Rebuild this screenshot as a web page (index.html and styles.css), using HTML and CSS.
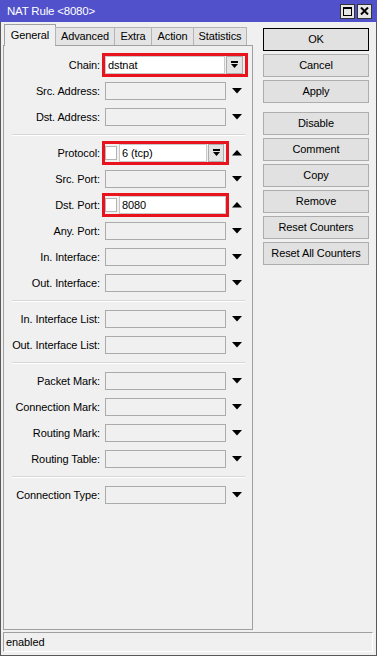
FILE: index.html
```html
<!DOCTYPE html>
<html lang="en">
<head>
    <meta charset="UTF-8">
    <meta name="viewport" content="width=device-width, initial-scale=1.0">
    <title>NAT Rule &lt;8080&gt;</title>
    <link rel="stylesheet" href="styles.css">
</head>
<body>
    <div class="window">
        <div class="titlebar">
            <span class="title">NAT Rule &lt;8080&gt;</span>
            <div class="title-buttons">
                <span class="tbtn">
                    <svg width="9" height="9" viewBox="0 0 9 9"><rect x="0.5" y="0.5" width="8" height="8" fill="none" stroke="#000"/><rect x="0" y="0" width="9" height="2" fill="#000"/></svg>
                </span>
                <span class="tbtn">
                    <svg width="9" height="8" viewBox="0 0 9 8"><path d="M1 0.5 L8 7.5 M8 0.5 L1 7.5" stroke="#000" stroke-width="2"/></svg>
                </span>
            </div>
        </div>

        <div class="main">
            <div class="left">
                <div class="tabs">
                    <div class="tab active t-general">General</div>
                    <div class="tab t-advanced">Advanced</div>
                    <div class="tab t-extra">Extra</div>
                    <div class="tab t-action">Action</div>
                    <div class="tab t-stats">Statistics</div>
                </div>
                <div class="panel">
                    <div class="row">
                        <label>Chain:</label>
                        <div class="field hl wide">
                            <div class="input white">dstnat</div>
                            <div class="drop"><svg width="7" height="8" viewBox="0 0 7 8"><rect x="0" y="0" width="7" height="2" fill="#000"/><polygon points="0,3 7,3 3.5,7" fill="#000"/></svg></div>
                        </div>
                    </div>
                    <div class="row">
                        <label>Src. Address:</label>
                        <div class="field"><div class="input"></div></div>
                        <span class="arrow"><svg width="10" height="6" viewBox="0 0 10 6"><polygon points="0,0 10,0 5,5.5" fill="#000"/></svg></span>
                    </div>
                    <div class="row">
                        <label>Dst. Address:</label>
                        <div class="field"><div class="input"></div></div>
                        <span class="arrow"><svg width="10" height="6" viewBox="0 0 10 6"><polygon points="0,0 10,0 5,5.5" fill="#000"/></svg></span>
                    </div>

                    <div class="sep"></div>

                    <div class="row">
                        <label>Protocol:</label>
                        <div class="field hl">
                            <span class="check"></span>
                            <div class="input white proto">6 (tcp)</div>
                            <div class="drop small"><svg width="7" height="8" viewBox="0 0 7 8"><rect x="0" y="0" width="7" height="2" fill="#000"/><polygon points="0,3 7,3 3.5,7" fill="#000"/></svg></div>
                        </div>
                        <span class="arrow"><svg width="10" height="6" viewBox="0 0 10 6"><polygon points="0,5.5 10,5.5 5,0" fill="#000"/></svg></span>
                    </div>
                    <div class="row">
                        <label>Src. Port:</label>
                        <div class="field"><div class="input"></div></div>
                        <span class="arrow"><svg width="10" height="6" viewBox="0 0 10 6"><polygon points="0,0 10,0 5,5.5" fill="#000"/></svg></span>
                    </div>
                    <div class="row">
                        <label>Dst. Port:</label>
                        <div class="field hl">
                            <span class="check"></span>
                            <div class="input white port">8080</div>
                        </div>
                        <span class="arrow"><svg width="10" height="6" viewBox="0 0 10 6"><polygon points="0,5.5 10,5.5 5,0" fill="#000"/></svg></span>
                    </div>
                    <div class="row">
                        <label>Any. Port:</label>
                        <div class="field"><div class="input"></div></div>
                        <span class="arrow"><svg width="10" height="6" viewBox="0 0 10 6"><polygon points="0,0 10,0 5,5.5" fill="#000"/></svg></span>
                    </div>
                    <div class="row">
                        <label>In. Interface:</label>
                        <div class="field"><div class="input"></div></div>
                        <span class="arrow"><svg width="10" height="6" viewBox="0 0 10 6"><polygon points="0,0 10,0 5,5.5" fill="#000"/></svg></span>
                    </div>
                    <div class="row">
                        <label>Out. Interface:</label>
                        <div class="field"><div class="input"></div></div>
                        <span class="arrow"><svg width="10" height="6" viewBox="0 0 10 6"><polygon points="0,0 10,0 5,5.5" fill="#000"/></svg></span>
                    </div>

                    <div class="sep"></div>

                    <div class="row">
                        <label>In. Interface List:</label>
                        <div class="field"><div class="input"></div></div>
                        <span class="arrow"><svg width="10" height="6" viewBox="0 0 10 6"><polygon points="0,0 10,0 5,5.5" fill="#000"/></svg></span>
                    </div>
                    <div class="row">
                        <label>Out. Interface List:</label>
                        <div class="field"><div class="input"></div></div>
                        <span class="arrow"><svg width="10" height="6" viewBox="0 0 10 6"><polygon points="0,0 10,0 5,5.5" fill="#000"/></svg></span>
                    </div>

                    <div class="sep"></div>

                    <div class="row">
                        <label>Packet Mark:</label>
                        <div class="field"><div class="input"></div></div>
                        <span class="arrow"><svg width="10" height="6" viewBox="0 0 10 6"><polygon points="0,0 10,0 5,5.5" fill="#000"/></svg></span>
                    </div>
                    <div class="row">
                        <label>Connection Mark:</label>
                        <div class="field"><div class="input"></div></div>
                        <span class="arrow"><svg width="10" height="6" viewBox="0 0 10 6"><polygon points="0,0 10,0 5,5.5" fill="#000"/></svg></span>
                    </div>
                    <div class="row">
                        <label>Routing Mark:</label>
                        <div class="field"><div class="input"></div></div>
                        <span class="arrow"><svg width="10" height="6" viewBox="0 0 10 6"><polygon points="0,0 10,0 5,5.5" fill="#000"/></svg></span>
                    </div>
                    <div class="row">
                        <label>Routing Table:</label>
                        <div class="field"><div class="input"></div></div>
                        <span class="arrow"><svg width="10" height="6" viewBox="0 0 10 6"><polygon points="0,0 10,0 5,5.5" fill="#000"/></svg></span>
                    </div>

                    <div class="sep"></div>

                    <div class="row">
                        <label>Connection Type:</label>
                        <div class="field"><div class="input"></div></div>
                        <span class="arrow"><svg width="10" height="6" viewBox="0 0 10 6"><polygon points="0,0 10,0 5,5.5" fill="#000"/></svg></span>
                    </div>
                </div>
            </div>

            <div class="buttons">
                <div class="btn default">OK</div>
                <div class="btn">Cancel</div>
                <div class="btn">Apply</div>
                <div class="btn group">Disable</div>
                <div class="btn">Comment</div>
                <div class="btn">Copy</div>
                <div class="btn">Remove</div>
                <div class="btn">Reset Counters</div>
                <div class="btn">Reset All Counters</div>
            </div>
        </div>

        <div class="status">enabled</div>
    </div>
</body>
</html>
```

FILE: styles.css
```css
* {
    margin: 0;
    box-sizing: border-box;
}

body {
    font-family: 'Liberation Sans', Arial, sans-serif;
    font-size: 11px;
    letter-spacing: -0.1px;
    color: #000;
    background: #f0f0f0;
}

.window {
    width: 377px;
    height: 656px;
    display: flex;
    flex-direction: column;
    background: #f0f0f0;
    border: 1px solid #5a5a5a;
    border-top: 0;
}

.titlebar {
    height: 22px;
    margin: 0 -1px;
    background: #5151cb;
    display: flex;
    align-items: center;
    justify-content: space-between;
    padding: 0 5px 0 7px;
}

.title {
    color: #fff;
    font-size: 11.5px;
    letter-spacing: -0.2px;
}

.title-buttons {
    display: flex;
    gap: 2px;
}

.tbtn {
    width: 15px;
    height: 15px;
    border: 1px solid #333;
    background: #e6e6e6;
    display: flex;
    align-items: center;
    justify-content: center;
}

.main {
    flex: 1;
    display: flex;
    padding: 2px 0 2px 2px;
}

.left {
    width: 250px;
    display: flex;
    flex-direction: column;
}

/* tabs */
.tabs {
    height: 21px;
    display: flex;
    align-items: flex-end;
    padding-left: 1px;
    position: relative;
    z-index: 1;
}

.tab {
    height: 18px;
    line-height: 17px;
    text-align: center;
    background: #e4e4e4;
    border: 1px solid #b4b4b4;
    border-bottom: 0;
    margin-left: -1px;
}

.tab.active {
    height: 22px;
    line-height: 20px;
    margin-bottom: -1px;
    margin-left: 0;
    background: #f0f0f0;
    border-color: #a0a0a0;
    padding-bottom: 3px;
}

.t-general { width: 52px; }
.t-advanced { width: 60px; }
.t-extra { width: 38px; }
.t-action { width: 43px; }
.t-stats { width: 54px; }

.panel {
    flex: 1;
    border: 1px solid #a0a0a0;
    padding-top: 6px;
}

/* form rows */
.row {
    height: 26px;
    display: flex;
    align-items: center;
}

.row label {
    width: 96px;
    text-align: right;
    white-space: nowrap;
}

.field {
    width: 127px;
    height: 24px;
    margin-left: 2px;
    border: 3px solid transparent;
    display: flex;
    align-items: center;
}

.field.hl {
    border-color: #e8131c;
}

.field.wide {
    width: 146px;
}

.input {
    width: 121px;
    height: 18px;
    border: 1px solid #ababab;
    line-height: 16px;
    padding-left: 2px;
}

.input.white {
    background: #fff;
    border-color: #c8c8c8;
}

.wide .input {
    width: 120px;
}

.input.proto {
    width: 88px;
}

.input.port {
    width: 107px;
}

.check {
    width: 12px;
    height: 14px;
    margin-right: 2px;
    background: #fff;
    border: 1px solid #b4b4b4;
}

.drop {
    width: 17px;
    height: 18px;
    margin-left: 1px;
    background: #e3e3e3;
    border: 1px solid #adadad;
    display: flex;
    align-items: center;
    justify-content: center;
}

.drop.small {
    width: 16px;
}

.arrow {
    margin-left: 3px;
    width: 10px;
    height: 6px;
    display: flex;
}

.sep {
    margin: 4px 7px 4px 8px;
    border-top: 1px solid #d6d6d6;
    border-bottom: 1px solid #fff;
}

/* right buttons */
.buttons {
    width: 106px;
    margin-left: 10px;
    padding-top: 4px;
    display: flex;
    flex-direction: column;
    gap: 3px;
}

.btn {
    height: 23px;
    line-height: 21px;
    text-align: center;
    background: #e1e1e1;
    border: 1px solid #adadad;
    white-space: nowrap;
}

.btn.default {
    border-color: #000;
}

.btn.group {
    margin-top: 6px;
}

.status {
    height: 20px;
    margin: 0 3px 3px 2px;
    border: 1px solid #a0a0a0;
    border-right-color: #fff;
    border-bottom-color: #fff;
    line-height: 18px;
    padding-left: 2px;
}
```
